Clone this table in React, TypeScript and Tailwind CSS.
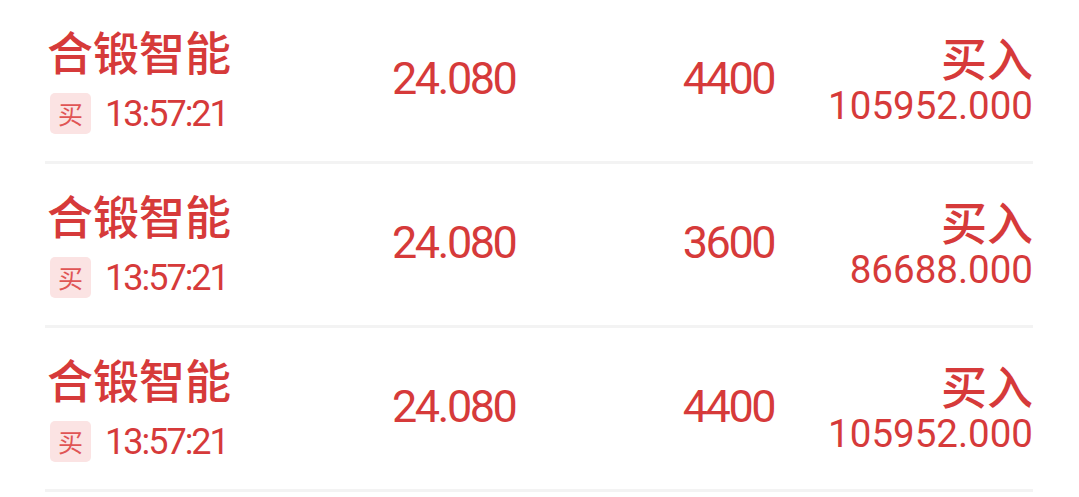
import React from "react";

const rows = [
  { name: "合锻智能", time: "13:57:21", price: "24.080", qty: "4400", amount: "105952.000" },
  { name: "合锻智能", time: "13:57:21", price: "24.080", qty: "3600", amount: "86688.000" },
  { name: "合锻智能", time: "13:57:21", price: "24.080", qty: "4400", amount: "105952.000" },
];

const num = { fontFamily: "Roboto, 'Noto Sans', sans-serif" };
const cjk = { fontFamily: "'Noto Sans CJK SC', 'Noto Sans', sans-serif" };

export default function App() {
  return (
    <div className="w-[1079px] h-[497px] bg-white overflow-hidden">
      <div className="ml-[45px] w-[988px]">
        {rows.map((r, i) => (
          <div
            key={i}
            className="h-[164px] border-b-[3px] border-[#f3f3f3] flex items-stretch text-[#d63a3a]"
          >
            <div className="w-[340px] flex flex-col pl-[2px] pt-[22px]">
              <div className="text-[46px] leading-[56px] font-medium" style={cjk}>
                {r.name}
              </div>
              <div className="flex items-center mt-[15px] gap-[14px]">
                <div
                  className="w-[41px] h-[41px] rounded-[5px] bg-[#fbe3e3] flex items-center justify-center text-[25px] text-[#e05555] ml-[3px]"
                  style={cjk}
                >
                  买
                </div>
                <div className="text-[36px] leading-none tracking-[-2px]" style={num}>
                  {r.time}
                </div>
              </div>
            </div>
            <div className="w-[7px]" />
            <div className="w-[170px] flex items-center pb-[4px]">
              <span className="text-[45px] leading-none tracking-[-2.5px]" style={num}>
                {r.price}
              </span>
            </div>
            <div className="w-[212px] flex items-center justify-end pb-[4px]">
              <span className="text-[45px] leading-none tracking-[-2.5px]" style={num}>
                {r.qty}
              </span>
            </div>
            <div className="flex-1 flex flex-col items-end pt-[28px]">
              <div className="text-[46px] leading-[56px] font-medium" style={cjk}>
                买入
              </div>
              <div className="text-[38.5px] leading-none mt-[3px]" style={num}>
                {r.amount}
              </div>
            </div>
          </div>
        ))}
      </div>
    </div>
  );
}
